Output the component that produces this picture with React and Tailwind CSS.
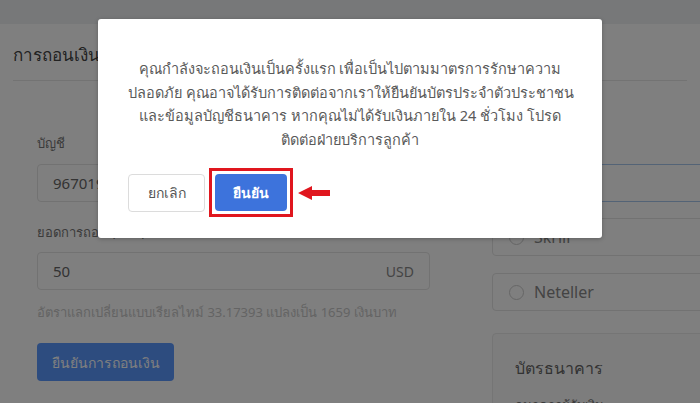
export default function App() {
  const font = "font-['Noto_Sans','Liberation_Sans',sans-serif]";
  return (
    <div className={`relative w-[700px] h-[403px] overflow-hidden bg-white ${font}`}>
      {/* page under the dialog */}
      <div className="h-[24px] bg-[#eef0f3]" />
      <div className="bg-white px-[13px]">
        <div className="h-[57px] flex items-center border-b border-[#e6e6e6]">
          <h1 className="text-[17px] font-medium text-[#444] pt-[6px]">การถอนเงิน</h1>
        </div>
        <div className="flex pl-[24px] pt-[50px] gap-[62px]">
          <div className="w-[393px] flex flex-col shrink-0">
            <label className="text-[13px] text-[#777] h-[24px] leading-[24px]">บัญชี</label>
            <div className="mt-[9px] h-[38px] border border-[#e4e4e4] rounded-[4px] flex items-center px-[15px] text-[15px] text-[#666]">
              967019
            </div>
            <label className="mt-[18px] text-[13px] text-[#777] h-[24px] leading-[24px]">ยอดการถอน (USD)</label>
            <div className="mt-[8px] h-[38px] border border-[#e4e4e4] rounded-[4px] flex items-center justify-between px-[15px] text-[15px] text-[#666]">
              <span>50</span>
              <span className="text-[14px] text-[#888]">USD</span>
            </div>
            <p className="mt-[12px] text-[13px] text-[#c8c8c8] leading-[20px]">อัตราแลกเปลี่ยนแบบเรียลไทม์ 33.17393 แปลงเป็น 1659 เงินบาท</p>
            <button className="mt-[21px] w-[137px] h-[38px] rounded-[4px] bg-[#5a98ff] text-white text-[14px]">ยืนยันการถอนเงิน</button>
          </div>
          <div className="w-[260px] shrink-0 flex flex-col pt-[33px]">
            <div className="h-[38px] border border-[#a6c6ec] rounded-[4px] flex items-center gap-[10px] px-[16px] text-[16px] text-[#888]">
              <span className="w-[15px] h-[15px] rounded-full border border-[#ccc]" />
              <span>Bank</span>
            </div>
            <div className="mt-[16px] h-[38px] border border-[#e4e4e4] rounded-[4px] flex items-center gap-[10px] px-[16px] text-[16px] text-[#888]">
              <span className="w-[15px] h-[15px] rounded-full border border-[#ccc]" />
              <span>Skrill</span>
            </div>
            <div className="mt-[17px] h-[38px] border border-[#e4e4e4] rounded-[4px] flex items-center gap-[10px] px-[16px] text-[16px] text-[#888]">
              <span className="w-[15px] h-[15px] rounded-full border border-[#ccc]" />
              <span>Neteller</span>
            </div>
            <div className="mt-[22px] h-[120px] border border-[#eaeaea] bg-[#fafafa] rounded-[4px] px-[22px] pt-[22px]">
              <div className="text-[16px] text-[#666]">บัตรธนาคาร</div>
              <div className="mt-[16px] text-[13px] text-[#777]">ธนาคารผู้รับเงิน</div>
            </div>
          </div>
        </div>
      </div>

      {/* overlay + dialog */}
      <div className="absolute inset-0 bg-black/50">
        <div className="mx-auto mt-[19px] w-[504px] h-[219px] bg-white rounded-[3px] shadow-[0_1px_4px_rgba(0,0,0,0.25)] px-[30px] pt-[38px] relative">
          <div className="text-center text-[14.5px] leading-[23.5px] text-[#5a5a5a] whitespace-nowrap">
            <div>คุณกำลังจะถอนเงินเป็นครั้งแรก เพื่อเป็นไปตามมาตรการรักษาความ</div>
            <div>ปลอดภัย คุณอาจได้รับการติดต่อจากเราให้ยืนยันบัตรประจำตัวประชาชน</div>
            <div>และข้อมูลบัญชีธนาคาร หากคุณไม่ได้รับเงินภายใน 24 ชั่วโมง โปรด</div>
            <div>ติดต่อฝ่ายบริการลูกค้า</div>
          </div>
          <div className="mt-[17px] flex items-center">
            <button className="w-[77px] h-[38px] border border-[#dcdcdc] rounded-[4px] bg-white text-[14px] text-[#555]">ยกเลิก</button>
            <div className="ml-[4px] border-[3px] border-[#e0161e] p-[3px]">
              <button className="w-[72px] h-[37px] rounded-[4px] bg-[#3d73dc] text-white text-[14px] font-bold">ยืนยัน</button>
            </div>
            <svg width="32" height="14" viewBox="0 0 32 14" className="ml-[5px]">
              <polygon points="0,7 14,0 14,4 32,4 32,10 14,10 14,14" fill="#e0161e" />
            </svg>
          </div>
        </div>
      </div>
    </div>
  );
}
